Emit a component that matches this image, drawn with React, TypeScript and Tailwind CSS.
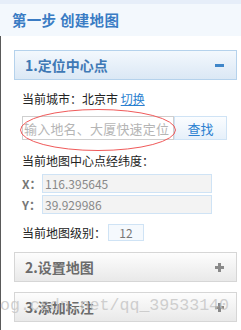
import React from 'react';

const FONT = '"Noto Sans CJK SC", "Liberation Sans", sans-serif';

const PanelHeader: React.FC<{ title: string; open?: boolean }> = ({ title, open }) => (
  <div
    className={`flex items-center justify-between h-[30px] pl-[10px] pr-[12px] border ${
      open
        ? 'border-[#b5d2ec] bg-gradient-to-b from-[#f3f8fd] to-[#dbe8f5] text-[#3f79b5]'
        : 'border-[#d6d6d6] bg-gradient-to-b from-[#fdfdfd] to-[#e9e9e9] text-[#6b6b6b]'
    }`}
  >
    <span className="text-[14px] font-bold leading-none">{title}</span>
    {open ? (
      <span className="block w-[9px] h-[3px] bg-[#3f86c9]" />
    ) : (
      <span className="relative block w-[9px] h-[9px]">
        <span className="absolute left-0 top-[3px] w-[9px] h-[3px] bg-[#8a8a8a]" />
        <span className="absolute left-[3px] top-0 w-[3px] h-[9px] bg-[#8a8a8a]" />
      </span>
    )}
  </div>
);

const App: React.FC = () => {
  return (
    <div className="relative w-[241px] h-[330px] overflow-hidden bg-white" style={{ fontFamily: FONT }}>
      <div className="h-[4px] bg-[#e6eef9]" />
      <div className="h-[32px] bg-[#f3f8fd] flex items-center pl-[12px]">
        <span className="text-[14.5px] font-bold text-[#3a7cc4] tracking-[0.3px]">第一步 创建地图</span>
      </div>

      <div className="border-l border-[#5a5a5a] h-[294px] pt-[14px] pl-[13px] pr-[4px]">
        <PanelHeader title="1.定位中心点" open />

        <div className="pl-[8px] pt-[13px] text-[12px] text-[#222] leading-none">
          <div>
            当前城市：北京市 <span className="text-[#2a7fd0] underline">切换</span>
          </div>

          <div className="relative flex mt-[11px]">
            <div className="w-[152px] h-[24px] border border-[#cfcfcf] flex items-center pl-[1px] text-[13px] text-[#b5b5b5] tracking-[0.2px]">
              输入地名、大厦快速定位
            </div>
            <div className="w-[53px] h-[24px] border border-[#cfe3f5] bg-gradient-to-b from-[#fbfdff] to-[#e6f0fa] flex items-center justify-center text-[13px] text-[#2a7fd0]">
              查找
            </div>
            <svg className="absolute left-[-3px] top-[-8px]" width="160" height="44" viewBox="0 0 160 44">
              <ellipse cx="79" cy="22" rx="77.5" ry="20.5" fill="none" stroke="#f05a5a" strokeWidth="1" />
            </svg>
          </div>

          <div className="mt-[15px]">当前地图中心点经纬度：</div>

          <div className="flex items-center mt-[7px]">
            <span className="w-[20px] font-bold text-[#777]">X：</span>
            <div className="w-[170px] h-[19px] border border-[#cfe3f5] bg-[#f3f3f3] flex items-center pl-[2px] text-[12px] text-[#888]">
              116.395645
            </div>
          </div>
          <div className="flex items-center mt-[2px]">
            <span className="w-[20px] font-bold text-[#777]">Y：</span>
            <div className="w-[170px] h-[19px] border border-[#cfe3f5] bg-[#f3f3f3] flex items-center pl-[2px] text-[12px] text-[#888]">
              39.929986
            </div>
          </div>

          <div className="flex items-center mt-[10px]">
            <span>当前地图级别：</span>
            <div className="ml-[2px] w-[36px] h-[17px] border border-[#cfe3f5] bg-[#f5f9fd] flex items-center justify-center text-[12px] text-[#777]">
              12
            </div>
          </div>
        </div>

        <div className="mt-[11px]">
          <PanelHeader title="2.设置地图" />
        </div>
        <div className="mt-[10px]">
          <PanelHeader title="3.添加标注" />
        </div>
      </div>

      <div
        className="absolute left-0 top-[294px] text-[16.6px] leading-[24px] text-[#c4c4c4]/80 whitespace-nowrap pointer-events-none"
        style={{ fontFamily: '"Liberation Mono", monospace' }}
      >
        og.csdn.net/qq_39533140
      </div>
    </div>
  );
};

export default App;
